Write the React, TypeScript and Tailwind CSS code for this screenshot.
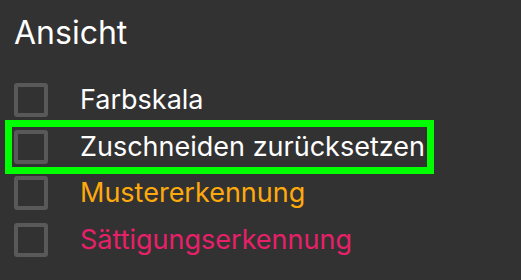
const items = [
  { label: "Farbskala", color: "text-white", highlighted: false },
  { label: "Zuschneiden zurücksetzen", color: "text-white", highlighted: true },
  { label: "Mustererkennung", color: "text-[#ffaa0c]", highlighted: false },
  { label: "Sättigungserkennung", color: "text-[#e8206a]", highlighted: false },
];

export default function App() {
  return (
    <div
      className="w-[521px] h-[280px] overflow-hidden bg-[#323232]"
      style={{ fontFamily: "Inter, 'Liberation Sans', sans-serif" }}
    >
      <h2 className="pl-[14px] pt-[13px] text-[32px] leading-[40px] text-white">Ansicht</h2>

      <ul className="mt-[24px]">
        {items.map((item) => (
          <li key={item.label} className="relative flex h-[46.5px] items-center">
            {/* Checkbox */}
            <span className="ml-[14px] h-[34px] w-[34px] rounded-[3px] border-[4px] border-[#595959]" />
            <span className={`ml-[32px] text-[27px] leading-[34px] ${item.color}`}>{item.label}</span>

            {/* Highlight */}
            {item.highlighted && (
              <span className="pointer-events-none absolute left-[5px] top-[-3.5px] h-[54px] w-[429px] border-[7px] border-[#00ff00]" />
            )}
          </li>
        ))}
      </ul>
    </div>
  );
}
